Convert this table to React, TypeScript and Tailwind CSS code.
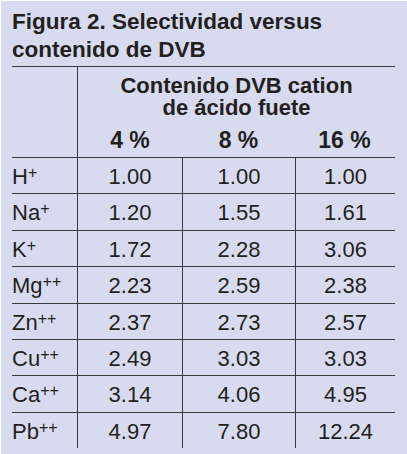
const rows: { ion: string; charge: string; values: [string, string, string] }[] = [
  { ion: "H", charge: "+", values: ["1.00", "1.00", "1.00"] },
  { ion: "Na", charge: "+", values: ["1.20", "1.55", "1.61"] },
  { ion: "K", charge: "+", values: ["1.72", "2.28", "3.06"] },
  { ion: "Mg", charge: "++", values: ["2.23", "2.59", "2.38"] },
  { ion: "Zn", charge: "++", values: ["2.37", "2.73", "2.57"] },
  { ion: "Cu", charge: "++", values: ["2.49", "3.03", "3.03"] },
  { ion: "Ca", charge: "++", values: ["3.14", "4.06", "4.95"] },
  { ion: "Pb", charge: "++", values: ["4.97", "7.80", "12.24"] },
];

export default function App() {
  return (
    <div className="h-[454px] w-[407px] overflow-hidden border-l border-t border-white bg-[#d8dbef] font-['Liberation_Sans',Arial,sans-serif] text-[#231f20]">
      <h1 className="pl-[11px] pt-[7px] text-[22.5px] font-bold leading-[28px]">
        Figura 2. Selectividad versus
        <br />
        contenido de DVB
      </h1>

      <div className="ml-[11px] mt-[2px] w-[383px]">
        {/* header */}
        <div className="flex h-[91px] border-t border-[#3b3b3f]">
          <div className="w-[66px] border-r border-[#3b3b3f]" />
          <div className="flex-1 pt-[8px] font-bold">
            <div className="text-center text-[22px] leading-[22px]">
              <div>Contenido DVB cation</div>
              <div>de ácido fuete</div>
            </div>
            <div className="mt-[9px] grid grid-cols-[104px_113px_99px] text-center text-[23px] leading-[24px]">
              <span>4 %</span>
              <span>8 %</span>
              <span>16 %</span>
            </div>
          </div>
        </div>

        {/* rows */}
        {rows.map((row) => (
          <div
            key={row.ion}
            className="grid h-[36.4px] grid-cols-[66px_105px_113px_99px] border-t border-[#3b3b3f] text-[22px] leading-[21px]"
          >
            <div className="border-r border-[#3b3b3f] pt-[8px]">
              {row.ion}
              <sup className="top-[-6px] text-[16px]">{row.charge}</sup>
            </div>
            <div className="border-r border-[#3b3b3f] pt-[8px] text-center">{row.values[0]}</div>
            <div className="border-r border-[#3b3b3f] pt-[8px] text-center">{row.values[1]}</div>
            <div className="pt-[8px] text-center">{row.values[2]}</div>
          </div>
        ))}
      </div>
    </div>
  );
}
